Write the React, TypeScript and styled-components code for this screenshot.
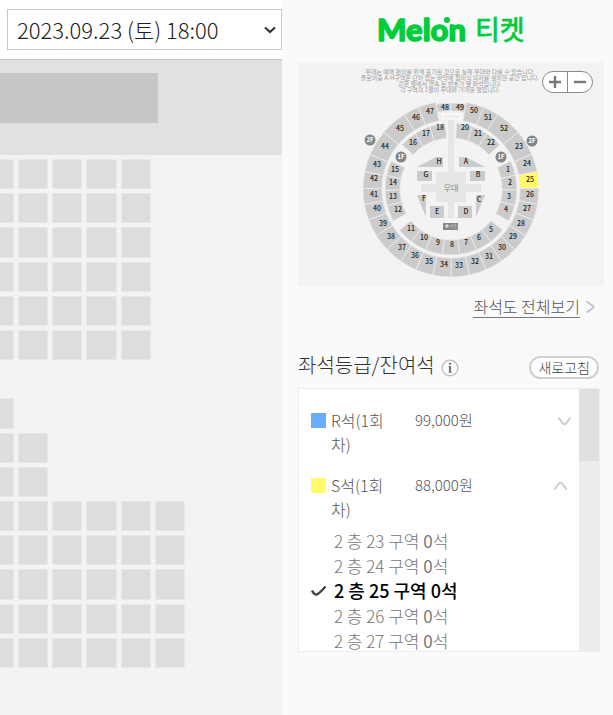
import React from 'react';
import styled, { createGlobalStyle } from 'styled-components';

const GlobalStyle = createGlobalStyle`
  *, *::before, *::after { box-sizing: border-box; }
  body {
    margin: 0;
    background: #fafafa;
    color: #333;
    font-family: "Noto Sans CJK KR", sans-serif;
    font-weight: 300;
  }
  button, select { font: inherit; color: inherit; }
  button { padding: 0; border: 0; background: none; cursor: pointer; }
  ul { margin: 0; padding: 0; list-style: none; }
`;

const Page = styled.div`
  display: flex;
  min-height: 100vh;
`;

/* ---------- Seat area ---------- */

const SeatArea = styled.main`
  flex: 1;
  min-width: 0;
  overflow: hidden;
  background: #f3f3f3;
`;

const DateBar = styled.div`
  display: flex;
  height: 60px;
  padding: 9px 0 9px 7px;
  background: #fff;
  border-bottom: 1px solid #c8c8c8;
`;

const DateField = styled.label`
  position: relative;
  flex: 1;
  display: flex;
`;

const DateSelect = styled.select`
  flex: 1;
  appearance: none;
  min-width: 0;
  padding: 0 24px 2px 9px;
  border: 1px solid #c8c8c8;
  border-radius: 0;
  background: #fff;
  font-size: 22px;
  color: #222;
`;

const SelectArrow = styled.svg`
  position: absolute;
  right: 5px;
  top: 16px;
  pointer-events: none;
`;

const StageZone = styled.div`
  height: 95px;
  padding-top: 13px;
  background: #e1e1e1;
`;

const StageBlock = styled.div`
  width: 56%;
  height: 50px;
  background: #c7c7c7;
`;

const SeatGrid = styled.div`
  display: grid;
  grid-template-columns: repeat(6, 1fr);
  grid-template-rows: repeat(15, 1fr);
  gap: 4px;
  width: 201px;
  height: 509px;
  margin: 4px 0 0 -16px;
`;

const Seat = styled.span<{ $row: number; $col: number }>`
  grid-row: ${(p) => p.$row};
  grid-column: ${(p) => p.$col};
  background: #ddd;
  border: 1px solid #e8e8e8;
`;

const seatsPerRow = [5, 5, 5, 5, 5, 5, 0, 1, 2, 2, 6, 6, 6, 6, 6];

/* ---------- Side panel ---------- */

const Side = styled.aside`
  width: 331px;
  flex: none;
  padding: 0 9px 0 16px;
  background: #fafafa;
`;

const LogoBar = styled.h1`
  display: flex;
  justify-content: center;
  height: 62px;
  margin: 0;
  padding-top: 12px;
`;

const MapBox = styled.div`
  position: relative;
  height: 224px;
  background: #f3f3f3;
`;

const MapDrawing = styled.svg`
  display: block;
  width: 100%;
  height: 100%;
`;

const ZoomControl = styled.div`
  position: absolute;
  top: 9px;
  right: 11px;
  display: flex;
  width: 51px;
  height: 22px;
  border: 1px solid #8a8a8a;
  border-radius: 11px;
  background: #fff;
`;

const ZoomButton = styled.button<{ $divided?: boolean }>`
  flex: 1;
  display: flex;
  align-items: center;
  justify-content: center;
  border-right: ${(p) => (p.$divided ? '1px solid #8a8a8a' : '0')};
`;

const FullMapRow = styled.div`
  display: flex;
  justify-content: flex-end;
  align-items: center;
  gap: 5px;
  height: 42px;
  padding-right: 9px;
`;

const FullMapLink = styled.a`
  height: 22px;
  border-bottom: 1px solid #777;
  color: #555;
  font-size: 16px;
  line-height: 20px;
  text-decoration: none;
`;

const GradeHeader = styled.div`
  display: flex;
  align-items: center;
  height: 60px;
  padding: 18px 5px 0 0;
`;

const GradeTitle = styled.h2`
  margin: 0 6px 4px 0;
  font-size: 20px;
  font-weight: 300;
  line-height: 28px;
`;

const InfoButton = styled.button`
  display: flex;
  margin-top: 2px;
`;

const RefreshButton = styled.button`
  height: 23px;
  margin-left: auto;
  padding: 0 7px 1px;
  border: 2px solid #d0d0d0;
  border-radius: 12px;
  background: #fff;
  color: #444;
  font-size: 14px;
  line-height: 18px;
`;

const GradeBox = styled.section`
  display: flex;
  height: 264px;
  margin-right: 4px;
  border: 1px solid #ededed;
  background: #fff;
  overflow: hidden;
`;

const GradeList = styled.ul`
  flex: 1;
  padding: 19px 0 0 12px;
`;

const GradeRow = styled.button<{ $open?: boolean }>`
  display: grid;
  grid-template-columns: 20px 60px 24px 1fr ${(p) => (p.$open ? '26px' : '22px')};
  width: 100%;
  margin-bottom: ${(p) => (p.$open ? '7px' : '17px')};
  color: #555;
  font-size: 16px;
  line-height: 24px;
  text-align: left;
`;

const Swatch = styled.span<{ $color: string }>`
  width: 15px;
  height: 15px;
  margin-top: 5px;
  background: ${(p) => p.$color};
`;

const Price = styled.span`
  grid-column: 4;
  font-size: 15px;
`;

const Chevron = styled.svg`
  margin-top: 7px;
`;

const ZoneButton = styled.button<{ $selected: boolean }>`
  display: flex;
  align-items: center;
  height: 25px;
  color: ${(p) => (p.$selected ? '#000' : '#777')};
  font-size: ${(p) => (p.$selected ? '18px' : '17px')};
  font-weight: ${(p) => (p.$selected ? 500 : 300)};
  line-height: 25px;
  white-space: nowrap;
`;

const ZoneMark = styled.span`
  display: flex;
  width: 23px;
`;

const Count = styled.span<{ $selected: boolean }>`
  font-weight: ${(p) => (p.$selected ? 500 : 400)};
`;

const ScrollTrack = styled.div`
  width: 20px;
  background: #ededed;
`;

const ScrollThumb = styled.div`
  height: 72px;
  background: #e0e0e0;
`;

/* ---------- Venue map data, measured from the centre of the hall ---------- */

type Block = [label: string, from: number, to: number, x: number, y: number];

const outerRing: Block[] = [
  ['50', 10, 21.7, 23, -78], ['51', 21.7, 32, 37, -71], ['52', 32, 49.7, 53, -60],
  ['23', 49.7, 66.7, 68, -42], ['24', 66.7, 78.5, 76, -25], ['25', 78.5, 89.5, 79, -9],
  ['26', 89.5, 100, 79, 6], ['27', 100, 110.5, 76, 20], ['28', 110.5, 122, 70, 35],
  ['29', 122, 133.5, 62, 48], ['30', 133.5, 145, 51, 59], ['31', 145, 156.5, 38, 68],
  ['32', 156.5, 168, 24, 73], ['33', 168, 180, 8, 77], ['34', 180, 192, -7, 76],
  ['35', 192, 203.5, -22, 73], ['36', 203.5, 215, -36, 67], ['37', 215, 226.5, -49, 59],
  ['38', 226.5, 238, -60, 48], ['39', 238, 249.5, -68, 35], ['40', 249.5, 260, -74, 20],
  ['41', 260, 270.5, -77, 6], ['42', 270.5, 281.5, -77, -10], ['43', 281.5, 293.3, -74, -24],
  ['44', 293.3, 310.3, -66, -42], ['45', 310.3, 328, -51, -60], ['46', 328, 338.3, -35, -71],
  ['47', 338.3, 350, -21, -77],
];

const topRing: Block[] = [
  ['48', 350, 360, -6, -81],
  ['49', 0, 10, 9, -81],
];

const innerRing: Block[] = [
  ['20', 5, 19, 14, -61], ['21', 19, 33, 27, -55], ['22', 33, 48, 40, -46],
  ['1', 65, 78, 57, -19], ['2', 78, 91, 59, -6], ['3', 91, 104.5, 58, 8],
  ['4', 104.5, 119, 55, 21], ['5', 128.5, 143, 40, 41], ['6', 143, 157.5, 28, 49],
  ['7', 157.5, 172.5, 15, 54], ['8', 172.5, 187.5, 1, 56], ['9', 187.5, 202.5, -13, 54],
  ['10', 202.5, 217, -27, 49], ['11', 217, 231.5, -40, 40], ['12', 241, 255.5, -53, 21],
  ['13', 255.5, 269, -58, 8], ['14', 269, 282, -58, -6], ['15', 282, 295, -56, -19],
  ['16', 312, 327, -38, -46], ['17', 327, 341, -25, -55], ['18', 341, 355, -11, -61],
];

const floorBlocks = [
  { label: 'H', points: '-34,-22 -15,-32 -8,-32 -8,-22', x: -12, y: -27 },
  { label: 'A', points: '8,-32 15,-32 34,-22 8,-22', x: 15, y: -27 },
  { label: 'G', points: '-34,-18 -19,-18 -19,-8 -34,-8', x: -25, y: -14 },
  { label: 'B', points: '19,-18 34,-18 34,-8 19,-8', x: 27, y: -14 },
  { label: 'F', points: '-34,6 -25,6 -25,28', x: -27, y: 10 },
  { label: 'C', points: '25,6 34,6 25,28', x: 28, y: 11 },
  { label: 'E', points: '-21,17 -7,17 -7,29 -21,29', x: -14, y: 23 },
  { label: 'D', points: '7,17 21,17 21,29 7,29', x: 15, y: 23 },
];

const floorMarks = [
  { label: '2F', x: -81, y: -49 },
  { label: '2F', x: 81, y: -48 },
  { label: '1F', x: -50, y: -32 },
  { label: '1F', x: 50, y: -32 },
];

const notices = [
  '무대는 예매 편의를 위해 표기된 것으로 실제 무대와 다를 수 있습니다.',
  '플로어층 A-H구역은 단차 없는 바닥에 접이식 의자를 설치한 공간 입니다.',
  '같은 열에서 연속 된 번호가 옆 좌석입니다.',
  '각 구역의 1열이 무대와 가까운 열입니다.',
];

const at = (radius: number, degrees: number) => {
  const a = (degrees * Math.PI) / 180;
  return `${(radius * Math.sin(a)).toFixed(2)} ${(-radius * Math.cos(a)).toFixed(2)}`;
};

const wedge = (outer: number, inner: number, from: number, to: number) =>
  `M${at(outer, from)}A${outer} ${outer} 0 0 1 ${at(outer, to)}L${at(inner, to)}A${inner} ${inner} 0 0 0 ${at(inner, from)}Z`;

function Ring({ blocks, outer, inner }: { blocks: Block[]; outer: number; inner: number }) {
  return (
    <g>
      {blocks.map(([label, from, to, x, y]) => (
        <g key={label}>
          <path
            d={wedge(outer, inner, from, to)}
            fill={label === '25' ? '#fffa66' : '#cbcbcb'}
            stroke="#ececec"
            strokeWidth="0.8"
          />
          <text x={x} y={y + 2}>{label}</text>
        </g>
      ))}
    </g>
  );
}

function VenueMap() {
  return (
    <MapDrawing viewBox="-153 -127 306 224" role="img" aria-label="좌석도">
      <g fontSize="6" fill="#999" fontWeight="400" textAnchor="middle">
        {notices.map((line, i) => (
          <text key={line} x="-1" y={-115 + i * 6}>{line}</text>
        ))}
      </g>
      <g fill="#e6e6e6">
        <rect x="-3" y="-69" width="6" height="98" />
        <rect x="-30" y="-5" width="60" height="8" />
        <rect x="-15" y="-17" width="30" height="30" />
      </g>
      <g fontSize="7" fontWeight="500" fill="#222" textAnchor="middle">
        <Ring blocks={outerRing} outer={88} inner={69} />
        <Ring blocks={topRing} outer={86} inner={78} />
        <Ring blocks={innerRing} outer={66} inner={51} />
        {floorBlocks.map((b) => (
          <g key={b.label}>
            <polygon points={b.points} fill="#cbcbcb" />
            <text x={b.x} y={b.y + 2}>{b.label}</text>
          </g>
        ))}
      </g>
      <path d="M-11 -76H12L11 -69H-10Z" fill="#fafafa" stroke="#e0e0e0" strokeWidth="0.5" />
      <text x="0" y="-71" fontSize="4" fill="#ccc" textAnchor="middle">CONSOLE</text>
      <text x="0" y="2" fontSize="8" fontWeight="400" fill="#888" textAnchor="middle">무대</text>
      <rect x="-8" y="34" width="15" height="7" fill="#888" />
      <text x="0" y="39" fontSize="4" fill="#ddd" textAnchor="middle">◆ 콘솔</text>
      {floorMarks.map((m) => (
        <g key={`${m.label}${m.x}`}>
          <circle cx={m.x} cy={m.y} r="5.5" fill="#858585" />
          <text x={m.x} y={m.y + 2} fontSize="6" fontWeight="700" fill="#fff" textAnchor="middle">{m.label}</text>
        </g>
      ))}
    </MapDrawing>
  );
}

function Logo() {
  return (
    <svg width="152" height="42" viewBox="0 0 152 42" role="img" aria-label="Melon 티켓">
      <g fill="#00cd3c" stroke="#00cd3c" strokeLinejoin="round">
        <text x="2" y="29" fontFamily="Lato, sans-serif" fontWeight="900" fontSize="31" strokeWidth="1.4">Melon</text>
        <circle cx="72" cy="8" r="2.6" />
        <text x="100" y="28" fontSize="27" fontWeight="500" strokeWidth="0.3">티켓</text>
      </g>
    </svg>
  );
}

function Arrow({ up }: { up?: boolean }) {
  return (
    <Chevron width="15" height="12" viewBox="0 0 15 12" fill="none" stroke="#ccc" strokeWidth="2" aria-hidden="true">
      <path d={up ? 'M1.5 9.5L5.5 4Q7.5 1.5 9.5 4L13.5 9.5' : 'M1.5 2.5L5.5 8Q7.5 10.5 9.5 8L13.5 2.5'} />
    </Chevron>
  );
}

const zones = [23, 24, 25, 26, 27];
const selectedZone = 25;

export default function App() {
  return (
    <>
      <GlobalStyle />
      <Page>
        <SeatArea>
          <DateBar>
            <DateField>
              <DateSelect aria-label="관람일시">
                <option>2023.09.23 (토) 18:00</option>
              </DateSelect>
              <SelectArrow width="14" height="10" viewBox="0 0 14 10" fill="none" stroke="#333" strokeWidth="2.2" aria-hidden="true">
                <path d="M2 2.5L7 7L12 2.5" />
              </SelectArrow>
            </DateField>
          </DateBar>
          <StageZone>
            <StageBlock />
          </StageZone>
          <SeatGrid>
            {seatsPerRow.flatMap((count, row) =>
              Array.from({ length: count }, (_, col) => (
                <Seat key={`${row}-${col}`} $row={row + 1} $col={col + 1} />
              )),
            )}
          </SeatGrid>
        </SeatArea>

        <Side>
          <LogoBar>
            <Logo />
          </LogoBar>
          <MapBox>
            <VenueMap />
            <ZoomControl>
              <ZoomButton $divided aria-label="확대">
                <svg width="14" height="14" viewBox="0 0 14 14" stroke="#777" strokeWidth="2.4">
                  <path d="M1 7H13M7 1V13" />
                </svg>
              </ZoomButton>
              <ZoomButton aria-label="축소">
                <svg width="14" height="14" viewBox="0 0 14 14" stroke="#777" strokeWidth="2.4">
                  <path d="M1 7H13" />
                </svg>
              </ZoomButton>
            </ZoomControl>
          </MapBox>
          <FullMapRow>
            <FullMapLink href="#map">좌석도 전체보기</FullMapLink>
            <svg width="10" height="14" viewBox="0 0 10 14" fill="none" stroke="#c4c4c4" strokeWidth="2" aria-hidden="true">
              <path d="M1.5 1.5L8 6Q9 7 8 8L1.5 12.5" />
            </svg>
          </FullMapRow>
          <GradeHeader>
            <GradeTitle>좌석등급/잔여석</GradeTitle>
            <InfoButton aria-label="안내">
              <svg width="18" height="18" viewBox="0 0 18 18">
                <circle cx="9" cy="9" r="7.8" fill="#fff" stroke="#c0c0c0" strokeWidth="1.4" />
                <path d="M7.5 7.5H9.5M9 7.5V13.5M7.5 13.3H10.8" fill="none" stroke="#888" strokeWidth="1" />
                <path d="M9 7V13.5M9 3.8V5.8" fill="none" stroke="#777" strokeWidth="2.2" />
              </svg>
            </InfoButton>
            <RefreshButton>새로고침</RefreshButton>
          </GradeHeader>
          <GradeBox>
            <GradeList>
              <li>
                <GradeRow aria-expanded={false}>
                  <Swatch $color="#6aadff" />
                  <span>R석(1회차)</span>
                  <Price>99,000원</Price>
                  <Arrow />
                </GradeRow>
              </li>
              <li>
                <GradeRow $open aria-expanded>
                  <Swatch $color="#fffb6b" />
                  <span>S석(1회차)</span>
                  <Price>88,000원</Price>
                  <Arrow up />
                </GradeRow>
                <ul>
                  {zones.map((zone) => {
                    const selected = zone === selectedZone;
                    return (
                      <li key={zone}>
                        <ZoneButton $selected={selected} aria-pressed={selected}>
                          <ZoneMark>
                            {selected && (
                              <svg width="16" height="12" viewBox="0 0 16 12" fill="none" stroke="#444" strokeWidth="2.4" aria-hidden="true">
                                <path d="M1 5.5Q3 9.5 5.5 9.5Q8 9 14.5 1.5" />
                              </svg>
                            )}
                          </ZoneMark>
                          <span>
                            2 층 {zone} 구역 <Count $selected={selected}>0</Count>석
                          </span>
                        </ZoneButton>
                      </li>
                    );
                  })}
                </ul>
              </li>
            </GradeList>
            <ScrollTrack>
              <ScrollThumb />
            </ScrollTrack>
          </GradeBox>
        </Side>
      </Page>
    </>
  );
}
